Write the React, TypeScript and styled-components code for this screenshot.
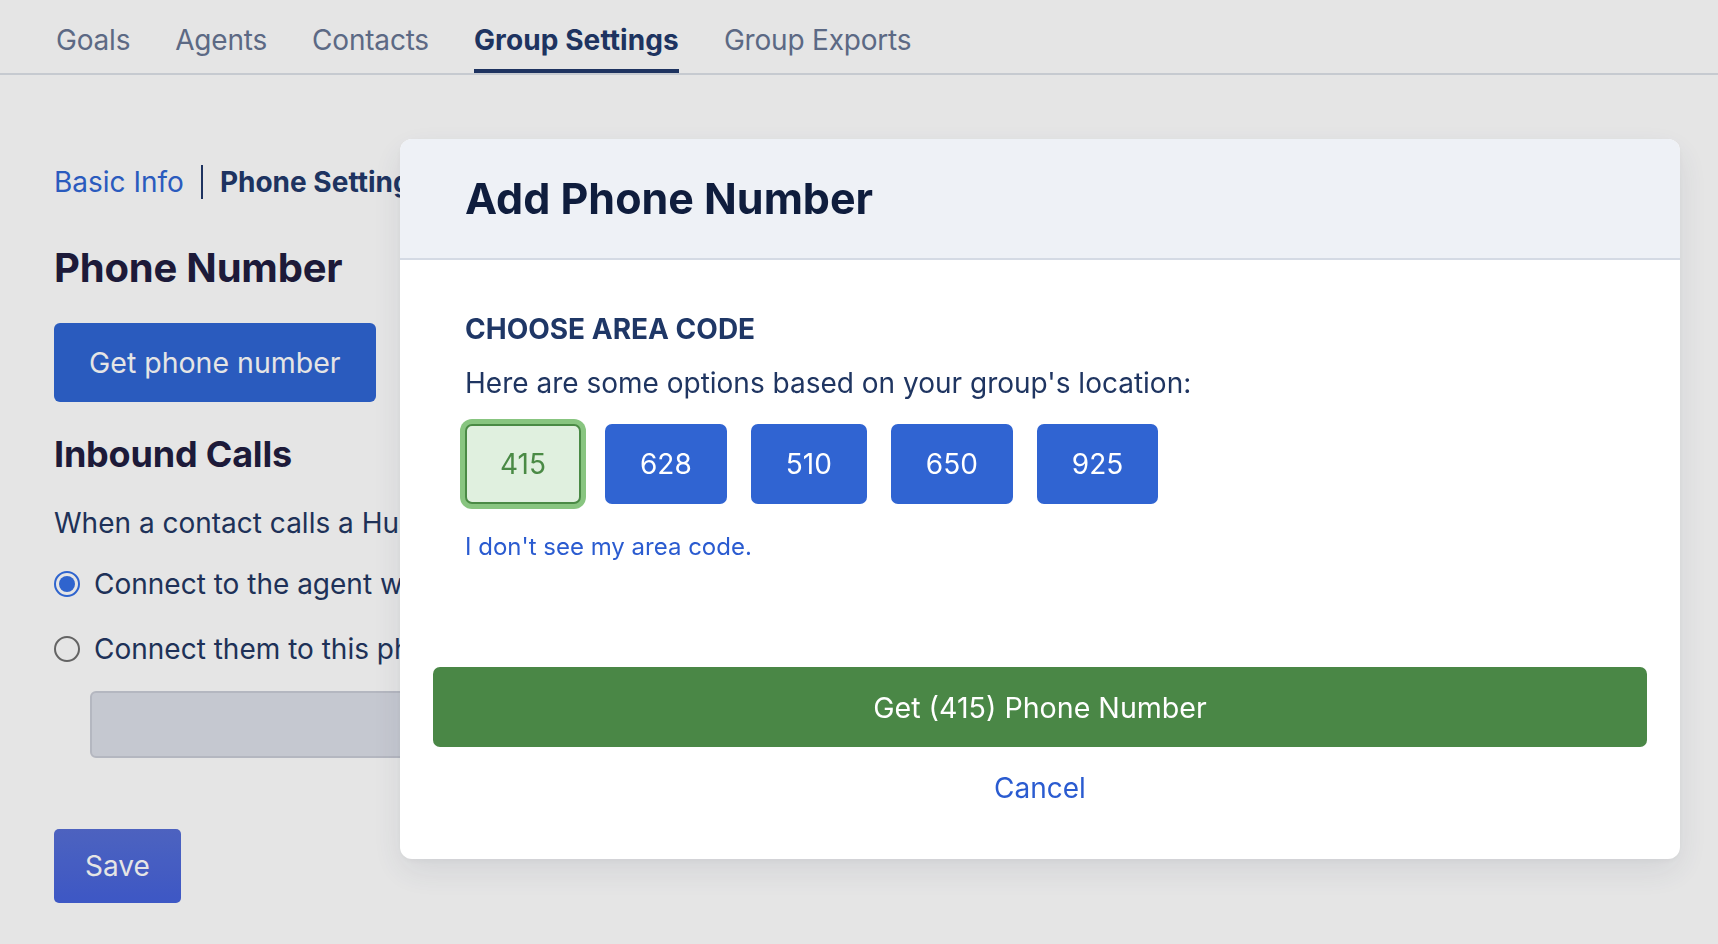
import { useState } from "react";
import styled, { createGlobalStyle } from "styled-components";

const GlobalStyle = createGlobalStyle`
  * { box-sizing: border-box; }
  html, body {
    margin: 0;
    padding: 0;
    background: #ffffff;
    font-family: Inter, "Noto Sans", "Liberation Sans", sans-serif;
    -webkit-font-smoothing: antialiased;
  }
`;

const Page = styled.div`
  min-height: 100vh;
  background: #ffffff;
`;

const TabBar = styled.nav`
  display: flex;
  gap: 45px;
  padding-left: 56px;
  border-bottom: 2px solid #dde1e8;
`;

const Tab = styled.div<{ $active?: boolean }>`
  padding: 23px 0 12px;
  font-size: 28px;
  line-height: 34px;
  font-weight: ${({ $active }) => ($active ? 700 : 400)};
  color: ${({ $active }) => ($active ? "#22396b" : "#677594")};
  border-bottom: 4px solid ${({ $active }) => ($active ? "#22396b" : "transparent")};
  letter-spacing: ${({ $active }) => ($active ? "0.1px" : "-0.2px")};
`;

const Content = styled.main`
  padding: 90px 0 0 54px;
  display: flex;
  flex-direction: column;
  align-items: flex-start;
`;

const Breadcrumb = styled.div`
  display: flex;
  align-items: center;
  font-size: 28px;
  line-height: 34px;
`;

const Crumb = styled.span<{ $current?: boolean }>`
  color: ${({ $current }) => ($current ? "#22396b" : "#2f66d4")};
  font-weight: ${({ $current }) => ($current ? 700 : 400)};
`;

const CrumbDivider = styled.span`
  width: 2px;
  height: 34px;
  background: #22396b;
  margin: 0 17px;
`;

const Heading = styled.h2<{ $size: number; $top: number }>`
  margin: ${({ $top }) => $top}px 0 0;
  font-size: ${({ $size }) => $size}px;
  line-height: 48px;
  font-weight: 700;
  color: #211d40;
  letter-spacing: -0.2px;
`;

const PrimaryButton = styled.button`
  margin-top: 31px;
  height: 79px;
  padding: 0 35px;
  border: none;
  border-radius: 6px;
  background: #2f66d4;
  color: #ffffff;
  font-family: inherit;
  font-size: 28.5px;
`;

const Paragraph = styled.p`
  margin: 28px 0 0;
  font-size: 28px;
  line-height: 34px;
  color: #233762;
  white-space: nowrap;
`;

const RadioRow = styled.label<{ $top: number }>`
  margin-top: ${({ $top }) => $top}px;
  display: flex;
  align-items: center;
  gap: 14px;
  font-size: 28px;
  line-height: 34px;
  color: #233762;
  white-space: nowrap;
`;

const RadioMark = styled.span<{ $checked?: boolean }>`
  width: 26px;
  height: 26px;
  border-radius: 50%;
  border: 2px solid ${({ $checked }) => ($checked ? "#3570e6" : "#707070")};
  background: #ffffff;
  display: flex;
  align-items: center;
  justify-content: center;
  &::after {
    content: "";
    width: 16px;
    height: 16px;
    border-radius: 50%;
    background: ${({ $checked }) => ($checked ? "#3570e6" : "transparent")};
  }
`;

const DisabledInput = styled.div`
  margin: 25px 0 0 36px;
  width: 560px;
  height: 67px;
  border-radius: 6px;
  background: #dcdfe8;
  border: 2px solid #c9ccd6;
`;

const SaveButton = styled.button`
  margin-top: 71px;
  height: 74px;
  width: 127px;
  border: none;
  border-radius: 5px;
  background: linear-gradient(180deg, #566ed5 0%, #4562dc 100%);
  color: #ffffff;
  font-family: inherit;
  font-size: 28px;
`;

const Backdrop = styled.div`
  position: fixed;
  inset: 0;
  background: rgba(0, 0, 0, 0.1);
`;

const Modal = styled.section`
  position: fixed;
  top: 139px;
  left: 400px;
  width: 1280px;
  background: #ffffff;
  border-radius: 12px;
  overflow: hidden;
  box-shadow: 0 12px 34px rgba(40, 50, 80, 0.1), 0 2px 6px rgba(40, 50, 80, 0.04);
`;

const ModalHeader = styled.header`
  height: 121px;
  display: flex;
  align-items: center;
  padding: 0 66px 2px 65px;
  background: #eef1f6;
  border-bottom: 2px solid #d4dae4;
`;

const ModalTitle = styled.h1`
  margin: 0;
  font-size: 43px;
  line-height: 50px;
  font-weight: 700;
  color: #0f1d3d;
`;

const ModalBody = styled.div`
  padding: 52px 33px 54px;
  display: flex;
  flex-direction: column;
`;

const Section = styled.div`
  padding: 0 32px;
  display: flex;
  flex-direction: column;
  align-items: flex-start;
`;

const SectionTitle = styled.h3`
  margin: 0;
  font-size: 28px;
  line-height: 34px;
  font-weight: 700;
  color: #1f3766;
  text-transform: uppercase;
`;

const Hint = styled.p`
  margin: 20px 0 0;
  font-size: 28px;
  line-height: 34px;
  color: #1f3561;
`;

const CodeRow = styled.div`
  margin-top: 24px;
  display: flex;
  gap: 24px;
`;

const CodeButton = styled.button<{ $selected?: boolean }>`
  height: 80px;
  padding: 0 33px;
  border-radius: 7px;
  font-family: inherit;
  font-size: 28px;
  font-weight: 400;
  cursor: pointer;
  border: 2px solid ${({ $selected }) => ($selected ? "#4a8a45" : "#3064d2")};
  background: ${({ $selected }) => ($selected ? "#e0f0df" : "#3064d2")};
  color: ${({ $selected }) => ($selected ? "#4a8a45" : "#ffffff")};
  box-shadow: ${({ $selected }) => ($selected ? "0 0 0 5px #88c580" : "none")};
`;

const TextLink = styled.a<{ $size: number }>`
  font-size: ${({ $size }) => $size}px;
  line-height: 30px;
  color: #2a5bd0;
  text-decoration: none;
  cursor: pointer;
`;

const HelpLink = styled(TextLink)`
  margin-top: 28px;
`;

const ConfirmButton = styled.button`
  margin-top: 105px;
  height: 80px;
  width: 100%;
  border: none;
  border-radius: 7px;
  background: #4a8746;
  color: #ffffff;
  font-family: inherit;
  font-size: 28.6px;
  cursor: pointer;
`;

const CancelLink = styled(TextLink)`
  margin-top: 24px;
  align-self: center;
  line-height: 34px;
`;

const tabs = ["Goals", "Agents", "Contacts", "Group Settings", "Group Exports"];
const areaCodes = ["415", "628", "510", "650", "925"];

export default function App() {
  const [selected, setSelected] = useState("415");

  return (
    <Page>
      <GlobalStyle />
      <TabBar>
        {tabs.map((t) => (
          <Tab key={t} $active={t === "Group Settings"}>
            {t}
          </Tab>
        ))}
      </TabBar>

      <Content>
        <Breadcrumb>
          <Crumb>Basic Info</Crumb>
          <CrumbDivider />
          <Crumb $current>Phone Settings</Crumb>
        </Breadcrumb>

        <Heading $size={40} $top={45}>Phone Number</Heading>
        <PrimaryButton>Get phone number</PrimaryButton>

        <Heading $size={36} $top={28}>Inbound Calls</Heading>
        <Paragraph>When a contact calls a Hustle phone number:</Paragraph>
        <RadioRow $top={27}>
          <RadioMark $checked />
          Connect to the agent who last texted them
        </RadioRow>
        <RadioRow $top={31}>
          <RadioMark />
          Connect them to this phone number:
        </RadioRow>
        <DisabledInput />

        <SaveButton>Save</SaveButton>
      </Content>

      <Backdrop />

      <Modal>
        <ModalHeader>
          <ModalTitle>Add Phone Number</ModalTitle>
        </ModalHeader>
        <ModalBody>
          <Section>
            <SectionTitle>Choose area code</SectionTitle>
            <Hint>Here are some options based on your group's location:</Hint>
            <CodeRow>
              {areaCodes.map((code) => (
                <CodeButton
                  key={code}
                  $selected={code === selected}
                  onClick={() => setSelected(code)}
                >
                  {code}
                </CodeButton>
              ))}
            </CodeRow>
            <HelpLink $size={24}>I don't see my area code.</HelpLink>
          </Section>
          <ConfirmButton>Get ({selected}) Phone Number</ConfirmButton>
          <CancelLink $size={28}>Cancel</CancelLink>
        </ModalBody>
      </Modal>
    </Page>
  );
}
